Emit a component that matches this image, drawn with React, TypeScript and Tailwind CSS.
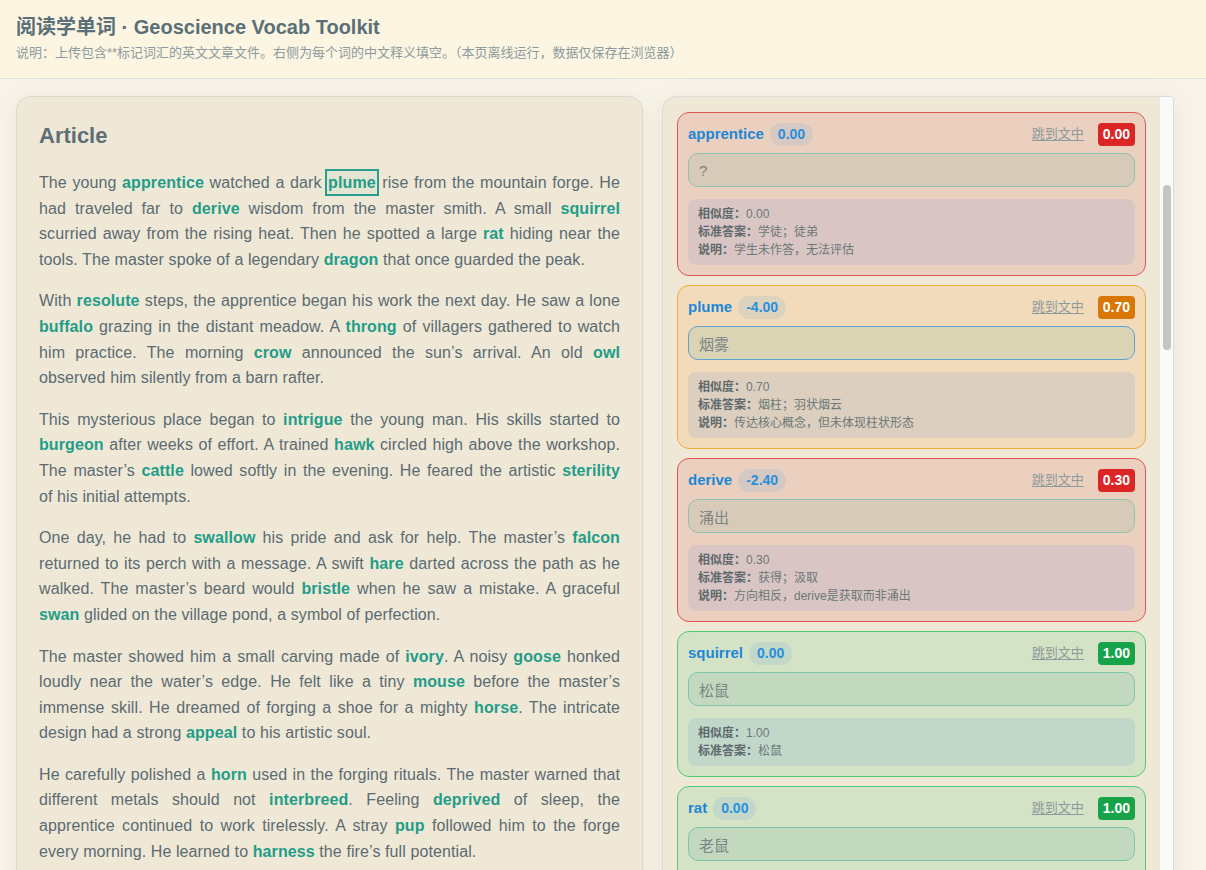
import React from "react";

// each paragraph is kept with the same line breaks as the original layout
const ARTICLE: string[][] = [
  [
    "The young **apprentice** watched a dark **plume** rise from the mountain forge. He",
    "had traveled far to **derive** wisdom from the master smith. A small **squirrel**",
    "scurried away from the rising heat. Then he spotted a large **rat** hiding near the",
    "tools. The master spoke of a legendary **dragon** that once guarded the peak.",
  ],
  [
    "With **resolute** steps, the apprentice began his work the next day. He saw a lone",
    "**buffalo** grazing in the distant meadow. A **throng** of villagers gathered to watch",
    "him practice. The morning **crow** announced the sun\u2019s arrival. An old **owl**",
    "observed him silently from a barn rafter.",
  ],
  [
    "This mysterious place began to **intrigue** the young man. His skills started to",
    "**burgeon** after weeks of effort. A trained **hawk** circled high above the workshop.",
    "The master\u2019s **cattle** lowed softly in the evening. He feared the artistic **sterility**",
    "of his initial attempts.",
  ],
  [
    "One day, he had to **swallow** his pride and ask for help. The master\u2019s **falcon**",
    "returned to its perch with a message. A swift **hare** darted across the path as he",
    "walked. The master\u2019s beard would **bristle** when he saw a mistake. A graceful",
    "**swan** glided on the village pond, a symbol of perfection.",
  ],
  [
    "The master showed him a small carving made of **ivory**. A noisy **goose** honked",
    "loudly near the water\u2019s edge. He felt like a tiny **mouse** before the master\u2019s",
    "immense skill. He dreamed of forging a shoe for a mighty **horse**. The intricate",
    "design had a strong **appeal** to his artistic soul.",
  ],
  [
    "He carefully polished a **horn** used in the forging rituals. The master warned that",
    "different metals should not **interbreed**. Feeling **deprived** of sleep, the",
    "apprentice continued to work tirelessly. A stray **pup** followed him to the forge",
    "every morning. He learned to **harness** the fire\u2019s full potential.",
  ],
];

type Tone = "red" | "orange" | "green";

const TONES: Record<Tone, { card: string; pill: string; input: string; info: string; badge: string }> = {
  red: {
    card: "border-[#e05656] bg-[#ebd0bf]",
    pill: "bg-[#d6c8c3]",
    input: "border-[#8cc3b1] bg-[#d8cab8]",
    info: "bg-[#d9c5c4]",
    badge: "bg-[#dc2626]",
  },
  orange: {
    card: "border-[#f2a93b] bg-[#f1dbbb]",
    pill: "bg-[#dcd3bf]",
    input: "border-[#5fa2d6] bg-[#dad4b5]",
    info: "bg-[#dccfbf]",
    badge: "bg-[#d97706]",
  },
  green: {
    card: "border-[#52c978] bg-[#d4e2c6]",
    pill: "bg-[#c3d8c9]",
    input: "border-[#7fc4aa] bg-[#c2d9bf]",
    info: "bg-[#c1d7ca]",
    badge: "bg-[#16a34a]",
  },
};

const CARDS: {
  word: string;
  delta: string;
  tone: Tone;
  answer: string;
  score: string;
  standard: string;
  note?: string;
}[] = [
  { word: "apprentice", delta: "0.00", tone: "red", answer: "?", score: "0.00", standard: "学徒；徒弟", note: "学生未作答，无法评估" },
  { word: "plume", delta: "-4.00", tone: "orange", answer: "烟雾", score: "0.70", standard: "烟柱；羽状烟云", note: "传达核心概念，但未体现柱状形态" },
  { word: "derive", delta: "-2.40", tone: "red", answer: "涌出", score: "0.30", standard: "获得；汲取", note: "方向相反，derive是获取而非涌出" },
  { word: "squirrel", delta: "0.00", tone: "green", answer: "松鼠", score: "1.00", standard: "松鼠" },
  { word: "rat", delta: "0.00", tone: "green", answer: "老鼠", score: "1.00", standard: "老鼠" },
];

function Line({ text, last }: { text: string; last: boolean }) {
  const parts = text.split("**");
  return (
    <span className={last ? "block" : "block text-justify [text-align-last:justify]"}>
      {parts.map((part, i) =>
        i % 2 === 0 ? (
          <span key={i}>{part}</span>
        ) : (
          <span
            key={i}
            className={
              part === "plume"
                ? "font-bold text-[#1f9d89] outline-2 outline-[#2a9d8f] bg-[#2a9d8f]/5 py-[3px] px-[1px]"
                : "font-bold text-[#1f9d89]"
            }
          >
            {part}
          </span>
        )
      )}
    </span>
  );
}

function WordCard({ card }: { card: (typeof CARDS)[number] }) {
  const t = TONES[card.tone];
  return (
    <div className={`rounded-[12px] border-[1.5px] px-[10px] pt-[9px] pb-[10px] ${t.card}`}>
      <div className="flex h-[24px] items-center">
        <span className="text-[15px] font-bold text-[#1d87d6]">{card.word}</span>
        <span className={`ml-[6px] rounded-full px-[8px] py-[3px] text-[14px] font-bold leading-[17px] text-[#2a8fdc] ${t.pill}`}>
          {card.delta}
        </span>
        <span className="ml-auto text-[13px] text-[#8d9a9b] underline underline-offset-2">跳到文中</span>
        <span className={`ml-[14px] rounded-[4px] px-[5px] py-[3px] text-[14px] font-bold leading-[17px] text-white ${t.badge}`}>
          {card.score}
        </span>
      </div>
      <input
        readOnly
        value={card.answer}
        className={`mt-[7px] block h-[34px] w-full rounded-[10px] border-[1.5px] px-[10px] text-[15px] text-[#7b8585] outline-none ${t.input}`}
      />
      <div className={`mt-[12px] rounded-[8px] px-[10px] py-[6px] text-[12px] leading-[18px] text-[#6b7878] ${t.info}`}>
        <div>
          <span className="font-bold text-[#5d696c]">相似度：</span>
          {card.score}
        </div>
        <div>
          <span className="font-bold text-[#5d696c]">标准答案：</span>
          {card.standard}
        </div>
        {card.note && (
          <div>
            <span className="font-bold text-[#5d696c]">说明：</span>
            {card.note}
          </div>
        )}
      </div>
    </div>
  );
}

export default function App() {
  return (
    <div className="h-[870px] overflow-hidden bg-[#f8f4e9] font-['Liberation_Sans','Noto_Sans_CJK_SC',sans-serif]">
      <header className="border-b border-[#dde2e0] bg-[#fcf5e2] px-4 pt-[13px] pb-[15px]">
        <h1 className="text-[20px] font-bold leading-[28px] text-[#5a6f77]">阅读学单词 · Geoscience Vocab Toolkit</h1>
        <p className="mt-[2px] text-[13px] leading-[20px] text-[#8c9b9f]">
          说明：上传包含**标记词汇的英文文章文件。右侧为每个词的中文释义填空。（本页离线运行，数据仅保存在浏览器）
        </p>
      </header>

      <main className="flex items-start gap-[19px] pl-4 pt-[17px]">
        <section className="w-[627px] shrink-0 rounded-[14px] border border-[#d9dbd3] bg-[#efe8d6] px-[22px] pt-[23px] pb-6 shadow-[0_4px_24px_rgba(120,100,60,0.10)]">
          <h2 className="mb-[18px] text-[22px] font-bold leading-[32px] text-[#5d6f76]">Article</h2>
          <div className="text-[16px] leading-[25.6px] tracking-[0.1px] text-[#5b6b72]">
            {ARTICLE.map((lines, i) => (
              <p key={i} className="mb-4">
                {lines.map((l, j) => (
                  <Line key={j} text={l} last={j === lines.length - 1} />
                ))}
              </p>
            ))}
          </div>
        </section>

        <aside className="flex h-[820px] w-[512px] shrink-0 overflow-hidden rounded-l-[14px] rounded-tr-[4px] border border-[#d9dcd6] bg-[#efe8d7] shadow-[0_4px_24px_rgba(120,100,60,0.10)]">
          <div className="flex flex-1 flex-col gap-[9px] overflow-hidden pt-[15px] pl-[14px] pr-[14px]">
            {CARDS.map((c) => (
              <WordCard key={c.word} card={c} />
            ))}
          </div>
          <div className="w-[13px] shrink-0 bg-[#fafafa]">
            <div className="mt-[88px] ml-[3px] h-[165px] w-[8px] rounded-full bg-[#c5c5c5]" />
          </div>
        </aside>
      </main>
    </div>
  );
}
